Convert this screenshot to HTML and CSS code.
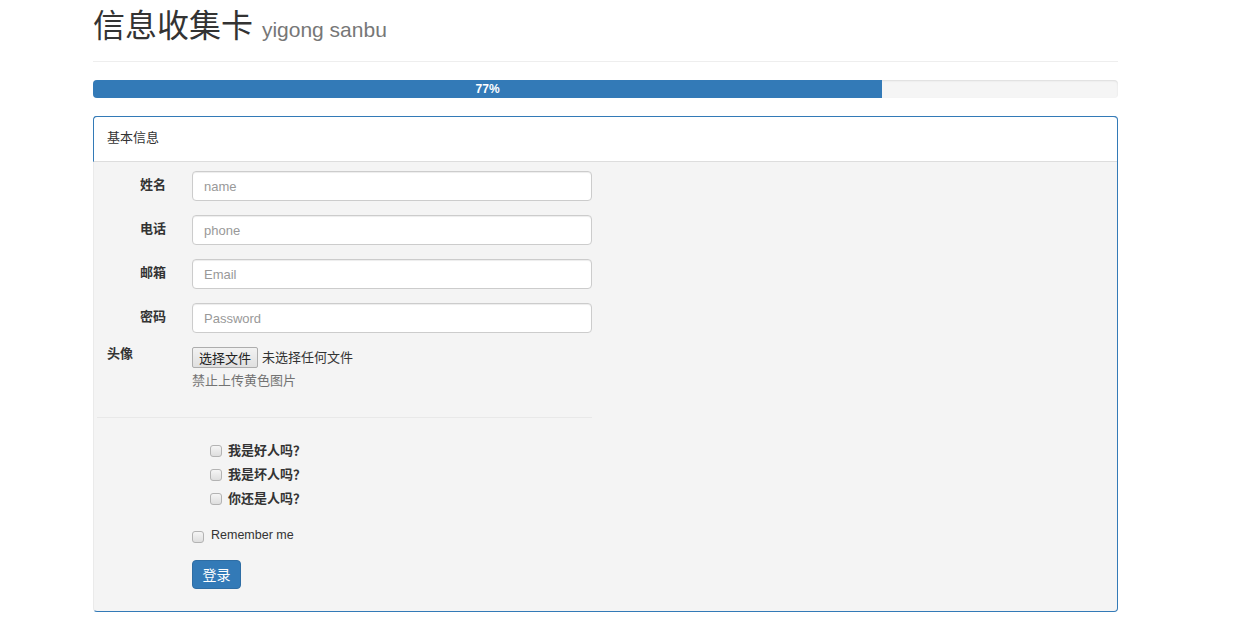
FILE: index.html
```html
<!DOCTYPE html>
<html lang="zh-CN">
<head>
<meta charset="utf-8">
<title>信息收集卡</title>
<link rel="stylesheet" href="styles.css">
</head>
<body>
<div class="container">
  <div class="page-header">
    <h1>信息收集卡 <small>yigong sanbu</small></h1>
  </div>
  <div class="progress">
    <div class="progress-bar" style="width: 77%">77%</div>
  </div>
  <div class="panel">
    <div class="panel-heading">基本信息</div>
    <div class="panel-body">
      <form class="form">
        <div class="form-row">
          <label class="form-label">姓名</label>
          <input class="form-control" type="text" placeholder="name">
        </div>
        <div class="form-row">
          <label class="form-label">电话</label>
          <input class="form-control" type="text" placeholder="phone">
        </div>
        <div class="form-row">
          <label class="form-label">邮箱</label>
          <input class="form-control" type="text" placeholder="Email">
        </div>
        <div class="form-row">
          <label class="form-label">密码</label>
          <input class="form-control" type="password" placeholder="Password">
        </div>
        <div class="form-row file-row">
          <label class="form-label left">头像</label>
          <div class="file-col">
            <div class="file-input"><span class="file-btn">选择文件</span><span class="file-name">未选择任何文件</span></div>
            <p class="help">禁止上传黄色图片</p>
          </div>
        </div>
        <hr class="divider">
        <div class="check-group">
          <label class="check bold"><input type="checkbox" class="cb"><span>我是好人吗？</span></label>
          <label class="check bold"><input type="checkbox" class="cb"><span>我是坏人吗？</span></label>
          <label class="check bold"><input type="checkbox" class="cb"><span>你还是人吗？</span></label>
        </div>
        <label class="check remember"><input type="checkbox" class="cb"><span>Remember me</span></label>
        <button type="button" class="btn">登录</button>
      </form>
    </div>
  </div>
</div>
</body>
</html>
```

FILE: styles.css
```css
* { box-sizing: border-box; }
body {
  margin: 0;
  font-family: "Liberation Sans", Arial, "Noto Sans CJK SC", sans-serif;
  font-size: 13px;
  line-height: 1.42857;
  color: #333;
  background: #fff;
}
.container {
  width: 1025px;
  margin-left: 93px;
}
.page-header {
  border-bottom: 1px solid #eee;
  padding-bottom: 9px;
}
.page-header h1 {
  margin: 0;
  padding-top: 4px;
  font-family: "Liberation Sans", "Noto Sans CJK SC", sans-serif;
  font-size: 32px;
  font-weight: 400;
  line-height: 44px;
  color: #333;
}
.page-header small {
  font-size: 21px;
  color: #777;
  font-weight: 400;
}
.progress {
  margin-top: 18px;
  height: 18px;
  background: #f5f5f5;
  border-radius: 4px;
  box-shadow: inset 0 1px 2px rgba(0,0,0,.1);
  overflow: hidden;
}
.progress-bar {
  height: 18px;
  background: #337ab7;
  color: #fff;
  font-size: 12px;
  font-weight: 700;
  line-height: 18px;
  text-align: center;
}
.panel {
  margin-top: 18px;
  border: 1px solid #337ab7;
  border-left-color: #eaeaea;
  border-radius: 4px;
  background: #f4f4f4;
}
.panel-heading {
  margin-left: -1px;
  margin-top: -1px;
  border: 1px solid #337ab7;
  border-right: 0;
  border-bottom: 1px solid #ddd;
  border-radius: 4px 4px 0 0;
  background: #fff;
  padding: 11px 13px 15px 13px;
  line-height: 18px;
  height: 46px;
  font-family: "Noto Sans CJK SC", sans-serif;
  font-size: 13px;
}
.panel-body {
  padding: 9px 14px 22px 13px;
}
.form-row {
  display: flex;
  align-items: flex-start;
  margin-bottom: 14px;
}
.form-label {
  width: 59px;
  margin-right: 26px;
  text-align: right;
  font-weight: 700;
  padding-top: 4px;
  line-height: 18px;
  font-family: "Noto Sans CJK SC", sans-serif;
  font-size: 13px;
}
.form-label.left {
  text-align: left;
  padding-top: 0;
  margin-top: -3px;
}
.form-control {
  width: 400px;
  height: 30px;
  border: 1px solid #ccc;
  border-radius: 4px;
  padding: 0 11px;
  font-family: "Liberation Sans", Arial, sans-serif;
  font-size: 13px;
  color: #555;
  background: #fff;
  box-shadow: inset 0 1px 1px rgba(0,0,0,.075);
}
.form-control::placeholder { color: #999; }
.file-row { margin-bottom: 0; }
.file-input {
  display: flex;
  align-items: center;
  height: 21px;
}
.file-btn {
  display: inline-block;
  height: 21px;
  line-height: 19px;
  padding: 0 6px;
  border: 1px solid #adadad;
  border-radius: 2px;
  background: linear-gradient(#f2f2f2, #e0e0e0);
  color: #222;
  font-family: "Noto Sans CJK SC", sans-serif;
  font-size: 13px;
}
.file-name {
  margin-left: 4px;
  font-family: "Noto Sans CJK SC", sans-serif;
  font-size: 13px;
  color: #333;
}
.help {
  margin: 3px 0 0;
  color: #737373;
  font-family: "Noto Sans CJK SC", sans-serif;
  font-size: 13px;
  line-height: 18px;
}
.divider {
  width: 495px;
  margin: 28px 0 20px -10px;
  border: 0;
  border-top: 1px solid #e8e8e8;
}
.check-group {
  padding-left: 103px;
  margin-bottom: 14px;
}
.check {
  display: flex;
  align-items: center;
  height: 24px;
  font-family: "Noto Sans CJK SC", sans-serif;
  font-size: 13px;
}
.check.bold { font-weight: 700; }
.cb {
  appearance: none;
  -webkit-appearance: none;
  width: 12px;
  height: 12px;
  margin: 2px 6px 0 0;
  border: 1px solid #b3b3b3;
  border-radius: 3px;
  background: linear-gradient(#f5f5f5, #dedede);
}
.remember {
  padding-left: 85px;
  font-family: "Liberation Sans", Arial, sans-serif;
  font-size: 12.5px;
  margin-bottom: 12px;
}
.remember .cb { margin-right: 7px; }
.btn {
  display: block;
  margin-left: 85px;
  width: 49px;
  height: 29px;
  padding: 0;
  border: 1px solid #2e6da4;
  border-radius: 4px;
  background: #337ab7;
  color: #fff;
  font-family: "Noto Sans CJK SC", sans-serif;
  font-size: 14px;
  line-height: 27px;
}
```
